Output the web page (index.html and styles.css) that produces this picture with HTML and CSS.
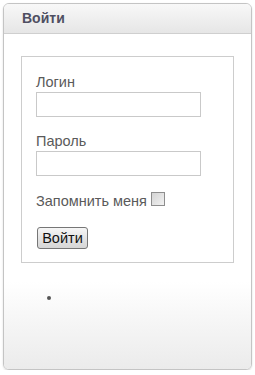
FILE: index.html
```html
<!DOCTYPE html>
<html>
<head>
	<title>Войти</title>
	<link rel="stylesheet" href="styles.css">
</head>
<body>
	<div class="panel">
		<div class="panel_head">Войти</div>
		<div class="panel_body">
			<form class="login_box">
				<label class="field_label" for="login">Логин</label>
				<input class="field_input" type="text" id="login">

				<label class="field_label" for="pass">Пароль</label>
				<input class="field_input" type="password" id="pass">

				<div class="remember">
					<span>Запомнить меня</span>
					<input class="remember_check" type="checkbox">
				</div>

				<button class="btn_login" type="button">Войти</button>
			</form>

			<ul class="links">
				<li>&nbsp;</li>
			</ul>
		</div>
	</div>
</body>
</html>
```

FILE: styles.css
```css
body {
	margin: 0;
	padding: 3px 3px 0 3px;
	font-family: "Liberation Sans", Arial, sans-serif;
	background: #fff;
}

.panel {
	width: 247px;
	height: 365px;
	border: 1px solid #c4c4c4;
	border-radius: 6px;
	box-shadow: 0 1px 2px rgba(0, 0, 0, 0.15);
	display: flex;
	flex-direction: column;
	overflow: hidden;
}

.panel_head {
	height: 29px;
	line-height: 28px;
	padding-left: 18px;
	border-bottom: 1px solid #cfcfcf;
	background: linear-gradient(to bottom, #f8f8f8 0%, #e6e6e6 100%);
	color: #4f4f62;
	font-weight: bold;
	font-size: 14px;
}

.panel_body {
	flex: 1;
	padding: 22px 17px 0 17px;
	background: linear-gradient(to bottom, #fff 0%, #fff 74%, #ebebeb 100%);
}

.login_box {
	margin: 0;
	border: 1px solid #cdcdcd;
	padding: 17px 14px 13px 14px;
	display: flex;
	flex-direction: column;
	align-items: flex-start;
	background: #fff;
}

.field_label {
	font-size: 14.5px;
	line-height: 16px;
	color: #5a5a5a;
	margin-bottom: 2px;
}

.field_input {
	box-sizing: border-box;
	width: 165px;
	height: 25px;
	margin: 0 0 16px 0;
	border: 1px solid #c9c9c9;
	padding: 2px 4px;
	font-family: inherit;
	font-size: 13px;
	background: #fff;
}

.remember {
	display: flex;
	align-items: center;
	font-size: 14.5px;
	line-height: 16px;
	color: #5a5a5a;
	margin-top: 1px;
}

.remember_check {
	appearance: none;
	-webkit-appearance: none;
	width: 14px;
	height: 14px;
	margin: -4px 0 0 4px;
	border: 1px solid #8e8e8e;
	background: linear-gradient(135deg, #d4d4d4 0%, #f2f2f2 100%);
}

.btn_login {
	margin-top: 18px;
	margin-left: 1px;
	width: 51px;
	height: 22px;
	padding: 0;
	border: 1px solid #767676;
	border-radius: 3px;
	background: linear-gradient(to bottom, #f6f6f6 0%, #e4e4e4 50%, #d6d6d6 100%);
	font-family: inherit;
	font-size: 14.5px;
	color: #111;
}

.links {
	margin: 26px 0 0 0;
	padding-left: 41px;
	font-size: 14px;
	line-height: 16px;
	color: #555;
}
```
